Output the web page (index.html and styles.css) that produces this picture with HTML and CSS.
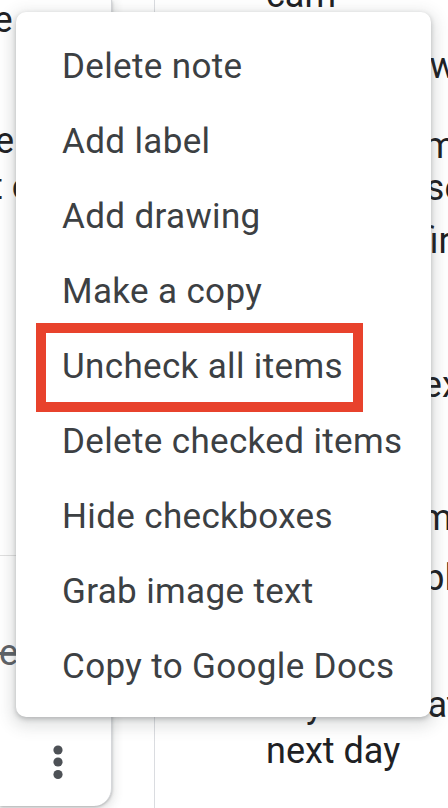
FILE: index.html
```html
<!DOCTYPE html>
<html lang="en">
<head>
<meta charset="utf-8">
<title>Note menu</title>
<link rel="stylesheet" href="styles.css">
</head>
<body>
<div class="page">
  <div class="note note-left">
    <div class="line l1">the</div>
    <div class="line l2">e list</div>
    <div class="line l3">t check</div>
    <div class="divider"></div>
    <div class="line checked">e done</div>
    <div class="more">
      <svg width="18" height="40" viewBox="0 0 18 40" aria-hidden="true">
        <circle cx="9" cy="8" r="4.6" fill="#4d5156"/>
        <circle cx="9" cy="20" r="4.6" fill="#4d5156"/>
        <circle cx="9" cy="32.5" r="4.6" fill="#4d5156"/>
      </svg>
    </div>
  </div>
  <div class="note note-right">
    <div class="line r1">cam</div>
    <div class="line r2">check the window</div>
    <div class="line r3">water the mint</div>
    <div class="line r4">under the seats</div>
    <div class="line r5">pack, the first aid kit</div>
    <div class="line r6">plan the next trip</div>
    <div class="line r7">clean the mirror</div>
    <div class="line r8">water the plants</div>
    <div class="line r9">buy taxes at the</div>
    <div class="line r10">next day</div>
  </div>
  <div class="menu">
    <div class="item">Delete note</div>
    <div class="item">Add label</div>
    <div class="item">Add drawing</div>
    <div class="item">Make a copy</div>
    <div class="item highlighted">Uncheck all items<span class="mark"></span></div>
    <div class="item">Delete checked items</div>
    <div class="item">Hide checkboxes</div>
    <div class="item">Grab image text</div>
    <div class="item">Copy to Google Docs</div>
  </div>
</div>
</body>
</html>
```
FILE: styles.css
```css
* { box-sizing: border-box; }
html, body {
  margin: 0;
  padding: 0;
  background: #ffffff;
}
.page {
  position: relative;
  width: 448px;
  height: 808px;
  overflow: hidden;
  display: flex;
  align-items: flex-start;
  gap: 42px;
  font-family: Roboto, "Noto Sans", Arial, sans-serif;
  color: #202124;
}
.note {
  flex: none;
  display: flex;
  flex-direction: column;
  background: #fff;
}
.line {
  font-size: 36px;
  line-height: 46px;
  height: 46px;
  white-space: nowrap;
}
.note-left {
  width: 112px;
  height: 806px;
  border-radius: 0 0 18px 0;
  box-shadow: 0 1px 3px rgba(60,64,67,.35), 0 4px 10px 3px rgba(60,64,67,.12);
  border-right: 1px solid #d5d7da;
}
.l1 { margin: -3px 0 0 -38px; }
.l2 { margin: 75px 0 0 -5px; }
.l3 { margin: 0 0 0 -9px; }
.divider {
  height: 1px;
  background: #e0e0e0;
  margin-top: 345px;
}
.checked {
  margin: 74px 0 0 -1px;
  color: #5f6368;
  text-decoration: line-through;
}
.more {
  margin: 66px 0 0 49px;
  width: 18px;
  height: 40px;
}
.more svg { display: block; }
.note-right {
  width: 300px;
  height: 808px;
  border-left: 1px solid #dadce0;
  padding-left: 111px;
}
.r1 { margin-top: -28px; }
.r2 { margin-top: 25px; }
.r3 { margin-top: 34px; }
.r4 { margin-top: -4px; }
.r5 { margin-top: 7px; }
.r6 { margin-top: 98px; }
.r7 { margin-top: 87px; }
.r8 { margin-top: 14px; }
.r9 { margin-top: 81px; }
.r10 { margin-top: 0; }
.menu {
  position: absolute;
  left: 16px;
  top: 12px;
  width: 415px;
  padding: 17px 0 13px;
  background: #fff;
  border-radius: 10px;
  box-shadow: 0 2px 5px 0 rgba(60,64,67,.3), 0 5px 15px 5px rgba(60,64,67,.15);
  display: flex;
  flex-direction: column;
}
.item {
  position: relative;
  height: 75px;
  line-height: 75px;
  padding-left: 46px;
  font-size: 35px;
  letter-spacing: 0.35px;
  color: #3c4043;
  white-space: nowrap;
}
.mark {
  position: absolute;
  left: 20px;
  top: -6px;
  width: 327px;
  height: 89px;
  border: 10px solid #e8422c;
}
```
